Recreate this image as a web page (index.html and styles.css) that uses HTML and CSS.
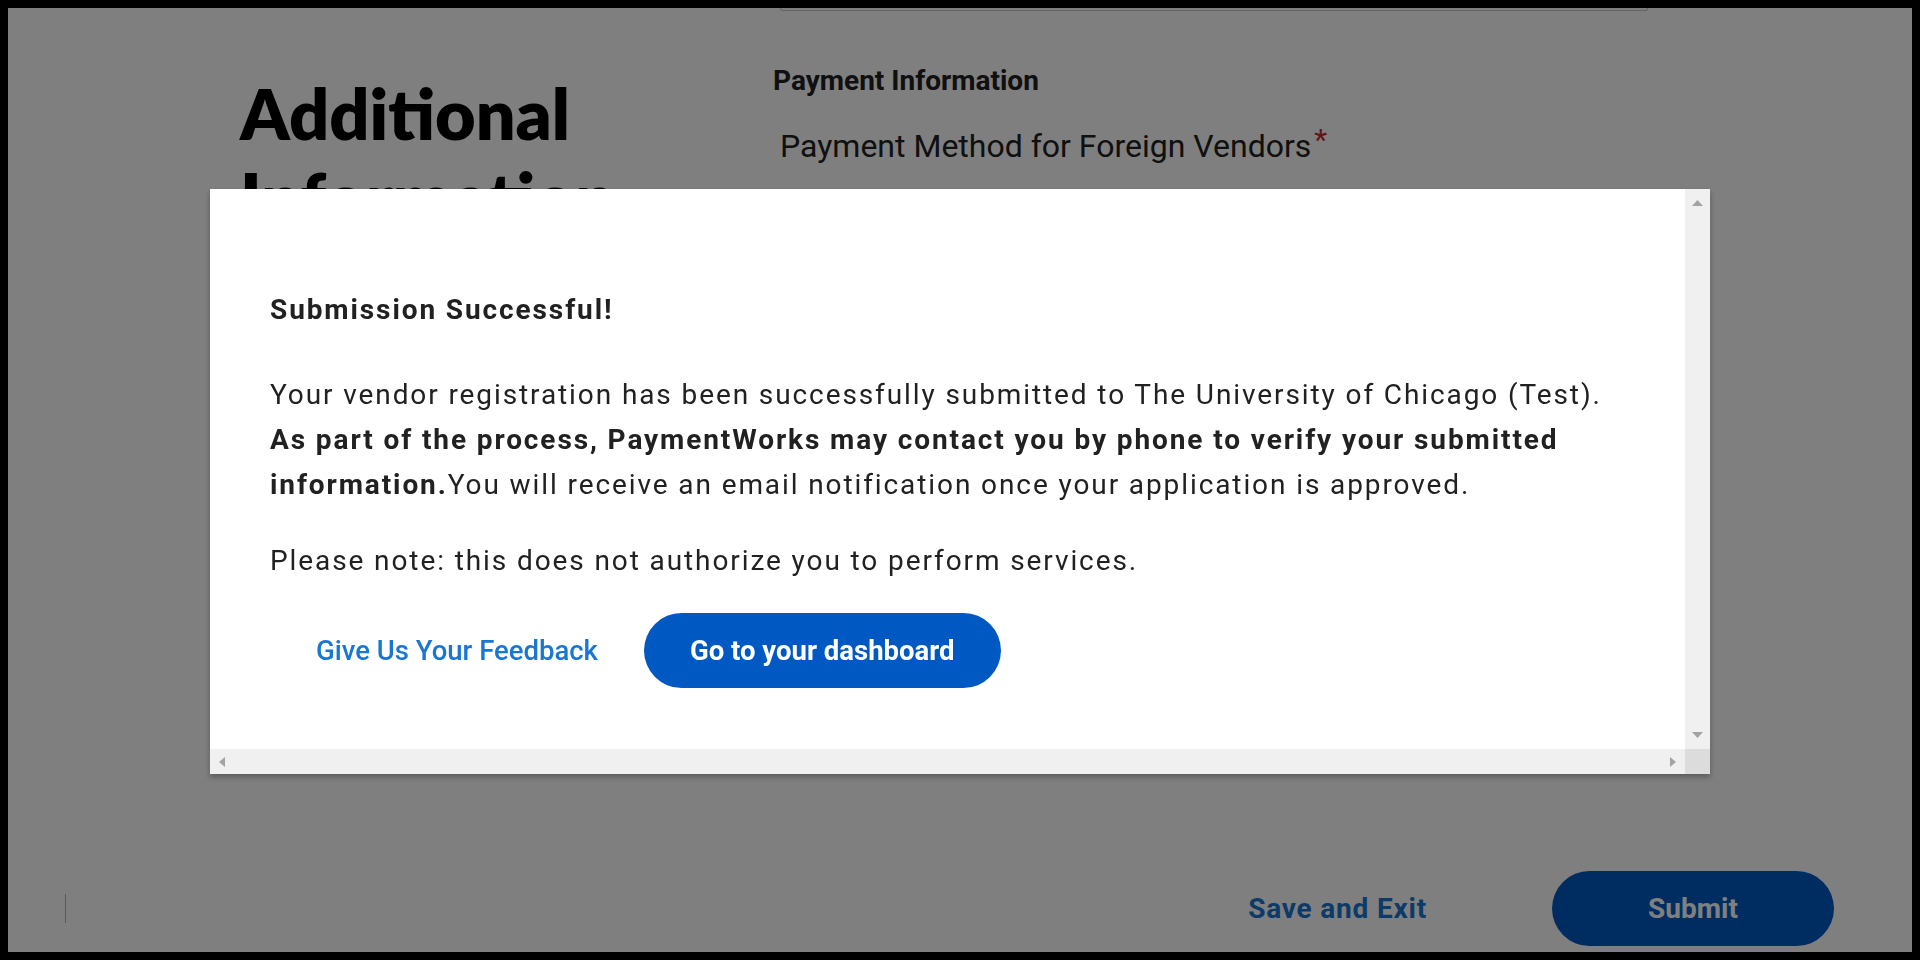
FILE: index.html
```html
<!DOCTYPE html>
<html lang="en">
<head>
    <meta charset="UTF-8">
    <meta name="viewport" content="width=device-width, initial-scale=1.0">
    <title>Vendor Registration</title>
    <link rel="stylesheet" href="styles.css">
</head>
<body>
    <div class="frame">
        <div class="page">
            <div class="form-area">
                <div class="side">
                    <h1>Additional Information</h1>
                </div>
                <div class="fields">
                    <div class="prev-input"></div>
                    <h3>Payment Information</h3>
                    <label class="field-label">Payment Method for Foreign Vendors<span class="req">*</span></label>
                </div>
            </div>
            <div class="footer">
                <span class="divider"></span>
                <a class="save" href="#">Save and Exit</a>
                <button class="submit">Submit</button>
            </div>
        </div>

        <div class="overlay">
            <div class="modal">
                <div class="modal-body">
                    <h2>Submission Successful!</h2>
                    <p>Your vendor registration has been successfully submitted to The University of Chicago (Test). <b>As part of the process, PaymentWorks may contact you by phone to verify your submitted information.</b>You will receive an email notification once your application is approved.</p>
                    <p>Please note: this does not authorize you to perform services.</p>
                    <div class="actions">
                        <a class="feedback" href="#">Give Us Your Feedback</a>
                        <button class="dashboard">Go to your dashboard</button>
                    </div>
                </div>
                <div class="vbar">
                    <svg width="11" height="6" viewBox="0 0 11 6"><polygon points="0,6 11,6 5.5,0" fill="#a3a3a3"/></svg>
                    <svg width="11" height="6" viewBox="0 0 11 6"><polygon points="0,0 11,0 5.5,6" fill="#a3a3a3"/></svg>
                </div>
                <div class="hbar">
                    <svg width="6" height="10" viewBox="0 0 6 10"><polygon points="6,0 6,10 0,5" fill="#a3a3a3"/></svg>
                    <svg width="6" height="10" viewBox="0 0 6 10"><polygon points="0,0 0,10 6,5" fill="#a3a3a3"/></svg>
                </div>
                <div class="corner"></div>
            </div>
        </div>
    </div>
</body>
</html>
```

FILE: styles.css
```css
* {
    margin: 0;
    padding: 0;
    box-sizing: border-box;
}

body {
    font-family: Roboto, "Liberation Sans", sans-serif;
    color: #212121;
    background: #000;
}

.frame {
    width: 1920px;
    height: 960px;
    border: 8px solid #000;
    overflow: hidden;
}

.page {
    height: 100%;
    background: #fff;
    display: flex;
    flex-direction: column;
}

.form-area {
    flex: 1;
    display: grid;
    grid-template-columns: 533px 875px;
    padding-left: 232px;
}

.side h1 {
    font-family: Lato, "Open Sans", sans-serif;
    font-weight: 800;
    font-size: 70px;
    line-height: 84px;
    color: #000;
    margin-top: 63px;
    width: 420px;
}

.fields {
    padding-left: 7px;
}

.prev-input {
    height: 3px;
    border: 1px solid #c8c8c8;
    border-top: none;
    border-radius: 0 0 8px 8px;
}

.fields h3 {
    font-size: 28px;
    font-weight: 700;
    line-height: 30px;
    margin: 55px 0 0 -7px;
    color: #212121;
}

.field-label {
    display: block;
    font-size: 32px;
    line-height: 40px;
    margin-top: 24px;
    color: #212121;
}

.req {
    color: #c62828;
    font-size: 30px;
    vertical-align: 7px;
    margin-left: 3px;
}

.footer {
    height: 75px;
    margin-bottom: 6px;
    display: flex;
    align-items: center;
    padding: 0 78px 0 57px;
}

.divider {
    width: 1px;
    height: 29px;
    background: #9fb6d9;
    margin-right: auto;
}

.save {
    font-size: 28px;
    font-weight: 700;
    letter-spacing: 0.8px;
    color: #1976d2;
    text-decoration: none;
    margin-right: 125px;
}

.submit {
    width: 282px;
    height: 75px;
    border: none;
    border-radius: 38px;
    background: #005ac2;
    color: #fff;
    font-family: Roboto, sans-serif;
    font-size: 28px;
    font-weight: 700;
}

.overlay {
    position: fixed;
    inset: 0;
    background: rgba(0, 0, 0, 0.5);
    display: flex;
    justify-content: center;
    align-items: center;
    padding-top: 3px;
}

.modal {
    width: 1500px;
    height: 585px;
    background: #fff;
    box-shadow: 0 3px 6px rgba(0, 0, 0, 0.3);
    display: grid;
    grid-template-columns: 1fr 25px;
    grid-template-rows: 1fr 25px;
}

.modal-body {
    padding: 98px 60px 0;
    font-size: 28px;
    line-height: 45px;
    letter-spacing: 1.9px;
    color: #212121;
}

.modal-body h2 {
    font-size: 28px;
    font-weight: 700;
    line-height: 45px;
    margin-bottom: 40px;
}

.modal-body p {
    margin-bottom: 31px;
}

.modal-body p + p {
    margin-bottom: 30px;
}

.actions {
    display: flex;
    align-items: center;
    letter-spacing: normal;
}

.feedback,
.dashboard {
    height: 75px;
    padding: 0 46px;
    font-family: Roboto, sans-serif;
    font-size: 27.5px;
    font-weight: 500;
    display: flex;
    align-items: center;
    text-decoration: none;
}

.feedback {
    color: #1976d2;
}

.dashboard {
    border: none;
    border-radius: 38px;
    background: #0059c2;
    color: #fff;
    font-weight: 700;
}

.vbar {
    background: #f0f0f0;
    display: flex;
    flex-direction: column;
    align-items: center;
    justify-content: space-between;
    padding: 11px 0;
}

.hbar {
    background: #f0f0f0;
    display: flex;
    align-items: center;
    justify-content: space-between;
    padding: 0 9px;
}

.corner {
    background: #dcdcdc;
}
```
